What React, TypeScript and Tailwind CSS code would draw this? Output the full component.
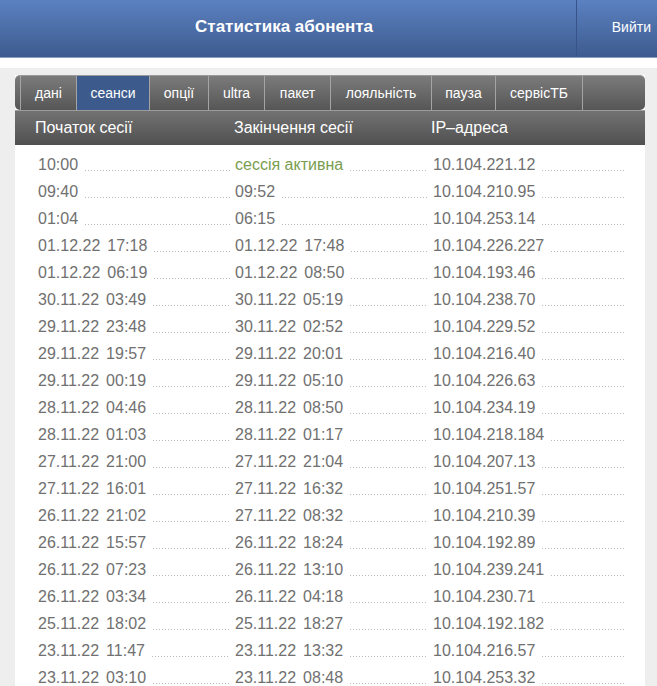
const tabs = [
  { label: "дані", w: "w-[56px]" },
  { label: "сеанси", w: "w-[73px]", active: true },
  { label: "опції", w: "w-[59px]" },
  { label: "ultra", w: "w-[56px]" },
  { label: "пакет", w: "w-[66px]" },
  { label: "лояльність", w: "w-[101px]" },
  { label: "пауза", w: "w-[64px]" },
  { label: "сервісТБ", w: "w-[87px]" },
];

type Row = [string, string, string];

const rows: Row[] = [
  ["10:00", "сессія активна", "10.104.221.12"],
  ["09:40", "09:52", "10.104.210.95"],
  ["01:04", "06:15", "10.104.253.14"],
  ["01.12.22 17:18", "01.12.22 17:48", "10.104.226.227"],
  ["01.12.22 06:19", "01.12.22 08:50", "10.104.193.46"],
  ["30.11.22 03:49", "30.11.22 05:19", "10.104.238.70"],
  ["29.11.22 23:48", "30.11.22 02:52", "10.104.229.52"],
  ["29.11.22 19:57", "29.11.22 20:01", "10.104.216.40"],
  ["29.11.22 00:19", "29.11.22 05:10", "10.104.226.63"],
  ["28.11.22 04:46", "28.11.22 08:50", "10.104.234.19"],
  ["28.11.22 01:03", "28.11.22 01:17", "10.104.218.184"],
  ["27.11.22 21:00", "27.11.22 21:04", "10.104.207.13"],
  ["27.11.22 16:01", "27.11.22 16:32", "10.104.251.57"],
  ["26.11.22 21:02", "27.11.22 08:32", "10.104.210.39"],
  ["26.11.22 15:57", "26.11.22 18:24", "10.104.192.89"],
  ["26.11.22 07:23", "26.11.22 13:10", "10.104.239.241"],
  ["26.11.22 03:34", "26.11.22 04:18", "10.104.230.71"],
  ["25.11.22 18:02", "25.11.22 18:27", "10.104.192.182"],
  ["23.11.22 11:47", "23.11.22 13:32", "10.104.216.57"],
  ["23.11.22 03:10", "23.11.22 08:48", "10.104.253.32"],
];

function Stamp({ value }: { value: string }) {
  const parts = value.split(" ");
  if (parts.length === 1) return <span>{value}</span>;
  return (
    <span>
      {parts[0]}
      <span className="ml-[7px]">{parts[1]}</span>
    </span>
  );
}

function Cell({ children }: { children: React.ReactNode }) {
  return (
    <div className="flex h-[27px] items-center pr-[5px]">
      <span className="whitespace-nowrap leading-[27px]">{children}</span>
      <div className="mt-[11px] ml-[7px] h-px flex-1 bg-[linear-gradient(to_right,#b8b8b8_1px,transparent_1px)] bg-[length:3px_1px] bg-repeat-x" />
    </div>
  );
}

export default function App() {
  return (
    <div
      className="min-h-screen overflow-hidden bg-white text-[#707070]"
      style={{ fontFamily: '"Liberation Sans", Arial, sans-serif' }}
    >
      <header className="flex h-[58px] border-b border-[#8b9dc0] bg-[linear-gradient(to_bottom,#5b81c1,#3d5b8e)] text-white">
        <div className="flex flex-1 items-center justify-center pb-[4px] pr-[8px] text-[17px] font-bold">
          Статистика абонента
        </div>
        <div className="flex w-[81px] items-center justify-end border-l border-[#38528a] pr-[6px] pb-[3px] text-[14px]">
          Вийти
        </div>
      </header>

      <div className="h-[10px] bg-white" />

      <div className="bg-[#eeeeee] px-[12px] pt-[7px] pl-[15px]">
        <div className="w-[630px] bg-white">
          <nav className="flex h-[35px] rounded-[5px] border-t border-[#9a9a9a] bg-[linear-gradient(to_bottom,#7b7b7b,#565656)] pl-[5px] text-[14px] text-white">
            {tabs.map((t) => (
              <div
                key={t.label}
                className={
                  "flex items-center justify-center border-l border-[#a4a4a4] " +
                  t.w +
                  (t.active ? " bg-[#3d5a8c]" : "")
                }
              >
                {t.label}
              </div>
            ))}
            <div className="flex-1 border-l border-[#a4a4a4]" />
          </nav>

          <div className="grid h-[35px] grid-cols-[199px_197px_1fr] items-center border-t border-[#9c9c9c] bg-[linear-gradient(to_bottom,#727272,#505050)] pl-[20px] text-[16px] text-white">
            <span>Початок сесії</span>
            <span>Закінчення сесії</span>
            <span>IP–адреса</span>
          </div>

          <div className="pl-[23px] pt-[6px] text-[16px]">
            {rows.map((r, i) => (
              <div key={i} className="grid grid-cols-[197px_198px_196px]">
                <Cell>
                  <Stamp value={r[0]} />
                </Cell>
                <Cell>
                  {r[1] === "сессія активна" ? (
                    <span className="text-[#7a9d50]">{r[1]}</span>
                  ) : (
                    <Stamp value={r[1]} />
                  )}
                </Cell>
                <Cell>{r[2]}</Cell>
              </div>
            ))}
          </div>
        </div>
      </div>
    </div>
  );
}
